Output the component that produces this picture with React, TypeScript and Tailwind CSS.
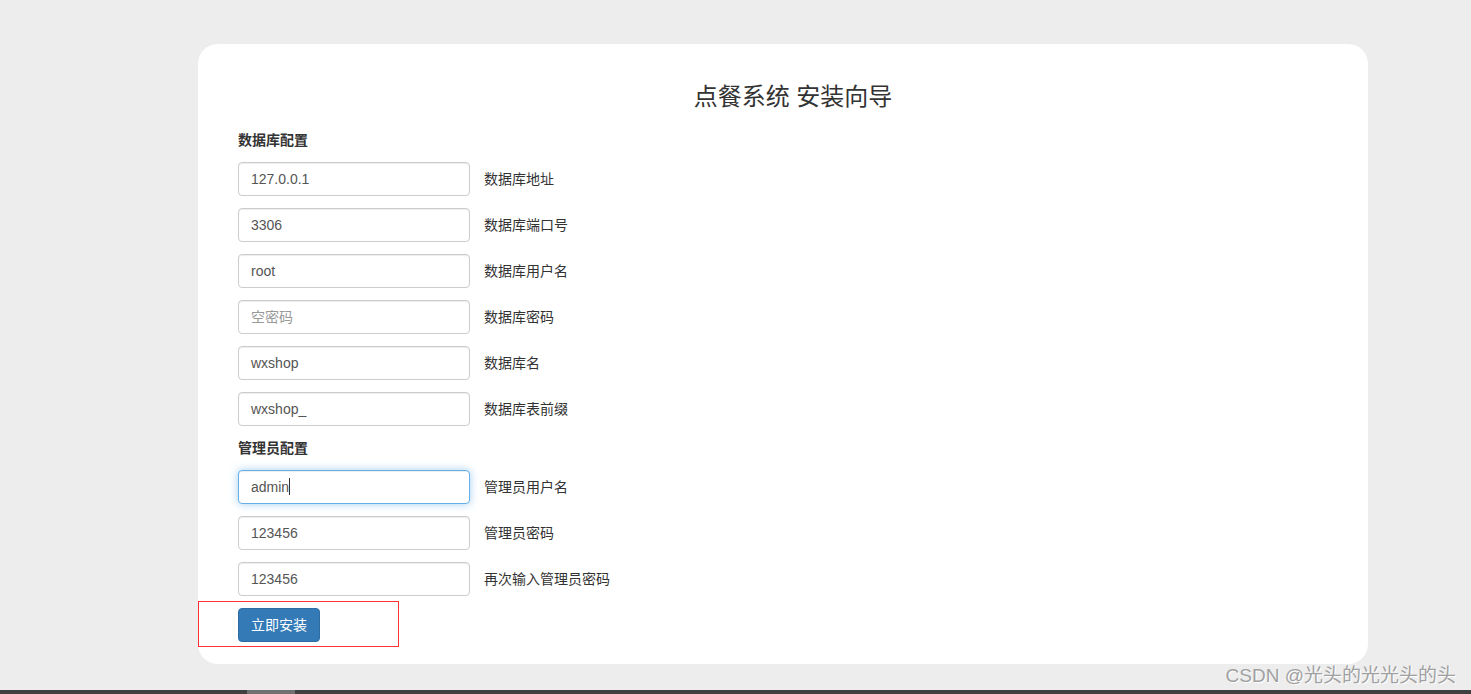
import React from "react";

const font = { fontFamily: '"Liberation Sans", Arial, "Noto Sans CJK SC", sans-serif' };

function Field({ value, label, placeholder, focused }: { value?: string; label: string; placeholder?: string; focused?: boolean }) {
  return (
    <div className="flex items-center gap-[14px]">
      <div
        className={
          "w-[232px] h-[34px] rounded-[4px] border px-[12px] flex items-center text-[14px] bg-white " +
          (focused
            ? "border-[#66afe9] shadow-[inset_0_1px_1px_rgba(0,0,0,0.075),0_0_8px_rgba(102,175,233,0.6)]"
            : "border-[#ccc] shadow-[inset_0_1px_1px_rgba(0,0,0,0.075)]")
        }
      >
        {value ? (
          <span className="text-[#555]">
            {value}
            {focused && <span className="inline-block w-px h-[17px] bg-[#333] align-middle -mt-[2px]" />}
          </span>
        ) : (
          <span className="text-[#999]">{placeholder}</span>
        )}
      </div>
      <span className="text-[14px] text-[#333]">{label}</span>
    </div>
  );
}

export default function App() {
  return (
    <div className="relative h-[694px] w-full bg-[#ededed] flex flex-col overflow-hidden" style={font}>
      <div className="flex-1 pt-[44px] pl-[198px] pr-[103px]">
        <div className="bg-white rounded-[20px] pt-[40px] pb-[22px] px-[40px] flex flex-col">
          <h3 className="text-[24px] leading-[26px] text-[#333] text-center pl-[20px] mb-[20px]">点餐系统 安装向导</h3>
          <div className="flex flex-col gap-[12px]">
            <div className="text-[14px] leading-[20px] font-bold text-[#333]">数据库配置</div>
            <Field value="127.0.0.1" label="数据库地址" />
            <Field value="3306" label="数据库端口号" />
            <Field value="root" label="数据库用户名" />
            <Field placeholder="空密码" label="数据库密码" />
            <Field value="wxshop" label="数据库名" />
            <Field value="wxshop_" label="数据库表前缀" />
            <div className="text-[14px] leading-[20px] font-bold text-[#333]">管理员配置</div>
            <Field value="admin" label="管理员用户名" focused />
            <Field value="123456" label="管理员密码" />
            <Field value="123456" label="再次输入管理员密码" />
            <div className="relative">
              <button className="h-[34px] w-[82px] rounded-[4px] bg-[#337ab7] border border-[#2e6da4] text-white text-[14px]">
                立即安装
              </button>
              <div className="absolute left-[-40px] top-[-7px] w-[201px] h-[46px] border border-[#ff3333] pointer-events-none" />
            </div>
          </div>
        </div>
      </div>
      <div className="h-[4px] bg-[#404040] flex">
        <div className="ml-[247px] w-[48px] h-full bg-[#707070]" />
      </div>
      <div
        className="absolute right-[15px] bottom-[6px] text-[19px] leading-[24px] text-[#a0a0a0] [text-shadow:1px_1px_0_#fff]"
        style={font}
      >
        CSDN @光头的光光头的头
      </div>
    </div>
  );
}
